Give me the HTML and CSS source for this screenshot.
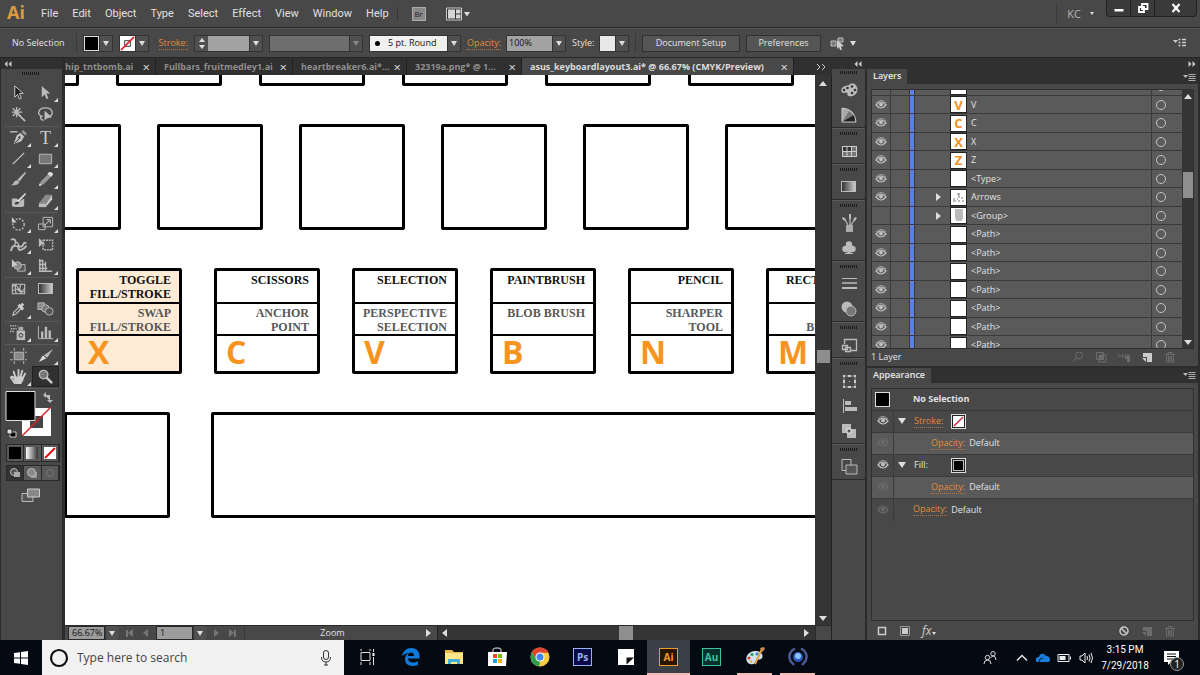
FILE: index.html
```html
<!DOCTYPE html>
<html lang="en">
<head>
    <meta charset="UTF-8">
    <meta name="viewport" content="width=device-width, initial-scale=1.0">
    <title>asus_keyboardlayout3.ai</title>
    <link rel="stylesheet" href="styles.css">
</head>
<body>

    <!-- Shared icons -->
    <svg class="sprite" aria-hidden="true">
        <symbol id="eye" viewBox="0 0 12 10"><path d="M1 5Q6 -1 11 5Q6 11 1 5Z" fill="none" stroke="currentColor" stroke-width="1.2"/><circle cx="6" cy="4.5" r="2" fill="currentColor"/><path d="M1 3Q6 -2 11 3" fill="none" stroke="currentColor" stroke-width=".7"/></symbol>
        <symbol id="menu" viewBox="0 0 13 8"><path d="M0 2h5L2.500 5z" fill="currentColor"/><path d="M5.500 1.500h7M5.500 3.500h7M5.500 5.500h7M5.500 7.500h7" stroke="currentColor" stroke-width=".9"/></symbol>
        <symbol id="new" viewBox="0 0 12 12"><path d="M2 2h9v9H6V6H2z" fill="currentColor"/><path d="M1 7h4v4z" fill="currentColor"/></symbol>
        <symbol id="trash" viewBox="0 0 12 12"><path d="M1 3.500h10M4 3V1.500h4V3M2.500 4v7h7V4M4.500 5v5M6 5v5M7.500 5v5" fill="none" stroke="currentColor"/></symbol>
        <symbol id="none" viewBox="0 0 16 16"><path d="M0 0h16v16H0z" fill="#fff"/><path d="M5 5h6v6H5z" fill="none" stroke="#333"/><path d="M1 15L15 1" stroke="#e0202a" stroke-width="1.800"/></symbol>
        <symbol id="left2" viewBox="0 0 8 6"><path d="M3.500 0v6L.5 3zM7.500 0v6l-3-3z" fill="currentColor"/></symbol>
        <symbol id="right2" viewBox="0 0 8 6"><path d="M.5 0v6l3-3zM4.500 0v6l3-3z" fill="currentColor"/></symbol>
    </svg>

    <!-- Menu bar -->
    <header class="menubar">
        <div class="logo">Ai</div>
        <nav class="menus">
            <a href="#">File</a><a href="#">Edit</a><a href="#">Object</a><a href="#">Type</a><a href="#">Select</a><a href="#">Effect</a><a href="#">View</a><a href="#">Window</a><a href="#">Help</a>
        </nav>
        <div class="menu-tools">
            <button class="bridge" title="Bridge">Br</button>
            <button class="arrange" title="Arrange Documents">
                <svg width="24" height="14" viewBox="0 0 24 14"><path d="M.5 1h15v12H.5z" fill="#333" stroke="#ccc"/><path d="M2 2.500h7v9H2zM10 2.500h4.500v4H10zM10 7.500h4.500v4H10z" fill="#d5d5d5"/><path d="M18 5h6l-3 4.500z" fill="#ddd"/></svg>
            </button>
        </div>
        <button class="user">KC <span class="tri"></span></button>
        <div class="window-buttons">
            <button title="Minimize"><svg width="10" height="10" viewBox="0 0 10 10"><path d="M.5 6h9v2.500h-9z" fill="#fff"/></svg></button>
            <button title="Restore"><svg width="12" height="12" viewBox="0 0 12 12"><path d="M5 2h5.500v5H5zM2 5h5v5H2z" fill="#333" stroke="#fff" stroke-width="1.800"/></svg></button>
            <button class="close" title="Close"><svg width="10" height="10" viewBox="0 0 10 10"><path d="M1.500 1l7 8M8.500 1l-7 8" stroke="#fff" stroke-width="2.200"/></svg></button>
        </div>
    </header>

    <!-- Control bar -->
    <div class="control-bar">
        <span class="no-sel">No Selection</span>
        <span class="sep"></span>
        <button class="swatch-drop" title="Fill"><span class="chip black"></span><span class="drop"></span></button>
        <button class="swatch-drop" title="Stroke color"><svg class="chip"><use href="#none"/></svg><span class="drop"></span></button>
        <label class="link stroke-label" for="strokeWeight"><span>Stroke:</span></label>
        <div class="combo weight"><span class="spin"></span><input type="text" id="strokeWeight"><span class="drop"></span></div>
        <div class="combo profile"><select aria-label="Width profile" disabled><option></option></select><span class="drop dim"></span></div>
        <div class="combo brush"><span class="dot"></span><select aria-label="Brush definition"><option>5 pt. Round</option></select><span class="drop"></span></div>
        <label class="link opacity-label" for="opacity"><span>Opacity:</span></label>
        <div class="combo opacity"><input type="text" id="opacity" value="100%"><span class="drop"></span></div>
        <span class="style-label">Style:</span>
        <button class="swatch-drop" title="Style"><span class="chip pale"></span><span class="drop"></span></button>
        <span class="sep"></span>
        <button class="push setup">Document Setup</button>
        <button class="push prefs">Preferences</button>
        <button class="bare" title="Select similar"><svg width="26" height="14" viewBox="0 0 26 14"><path d="M1 5h5v5H1zM8 2h5v4H8z" fill="#777" stroke="#bbb"/><path d="M7 4l7 6-3 .5 1 3-2 .5-1-3-2 2z" fill="#ccc"/><path d="M20 5h6l-3 5z" fill="#ddd"/></svg></button>
        <button class="bare bar-menu" title="Options"><svg width="13" height="10" viewBox="0 0 13 10"><path d="M0 2h5L2.500 5z" fill="#ccc"/><path d="M5.500 1.500h2M9 1.500h4M5.500 4.500h2M9 4.500h4M5.500 7.500h2M9 7.500h4" stroke="#ccc" stroke-width="1.300"/></svg></button>
    </div>

    <main class="workspace">

        <!-- Tools -->
        <aside class="toolbox">
            <div class="strip"><svg width="8" height="6"><use href="#left2"/></svg></div>
            <div class="grip"></div>
            <div class="tools first">
                <button title="Selection"><svg viewBox="0 0 18 18"><path d="M5 2v12l3-3 2 5 2-1-2-5h4z" fill="#222" stroke="#ccc"/></svg></button>
                <button class="more" title="Direct Selection"><svg viewBox="0 0 18 18"><path d="M5 2v12l3-3 2 5 2-1-2-5h4z" fill="#bbb"/></svg></button>
                <button title="Magic Wand"><svg viewBox="0 0 18 18"><path d="M8 8l8 8" stroke="#bbb" stroke-width="1.800"/><path d="M7 1v11M2 6.500h11M3 2.500l8 8M11 2.500l-8 8" stroke="#bbb" stroke-width="1.500"/></svg></button>
                <button title="Lasso"><svg viewBox="0 0 18 18"><path d="M6 11C-1 10 1 2 9 2s9 7 4 9M4 10q-1 5 3 5" fill="none" stroke="#bbb" stroke-width="1.500"/><path d="M8 5v10l3-2 5-1z" fill="#bbb"/></svg></button>
            </div>
            <div class="tools">
                <button class="more" title="Pen"><svg viewBox="0 0 18 18"><path d="M0 3h8" stroke="#bbb" stroke-width="1.500"/><path d="M4 16l3-9 4-3 4 4-3 5z" fill="#c4c4c4"/><path d="M12 3l2-2 4 4-2 2z" fill="#999"/><path d="M5 15l5-5" stroke="#333"/><circle cx="10" cy="9" r="1.200" fill="#333"/></svg></button>
                <button class="more" title="Type"><span class="type-icon">T</span></button>
                <button class="more" title="Line"><svg viewBox="0 0 18 18"><path d="M3 15L15 3" stroke="#ccc" stroke-width="1.200"/></svg></button>
                <button class="more" title="Rectangle"><svg viewBox="0 0 18 18"><path d="M2.500 4.500h13v10h-13z" fill="#777" stroke="#bbb"/></svg></button>
                <button title="Paintbrush"><svg viewBox="0 0 18 18"><path d="M16 1l1 1-7 9-2-2z" fill="#bbb"/><path d="M8 10l2 2q-2 4-9 3 3-1 3-3 2-3 4-2z" fill="#bbb"/></svg></button>
                <button class="more" title="Pencil"><svg viewBox="0 0 18 18"><path d="M13 2l3 3-9 9-5 2 2-5z" fill="#999"/><path d="M13 1q4 0 4 3l-2 2-4-3z" fill="#ddd"/><path d="M2 16l1-3 2 2z" fill="#ddd"/></svg></button>
                <button title="Blob Brush"><svg viewBox="0 0 18 18"><path d="M2 7h5l3 3 5-3v8q-6 2-13 0z" fill="#bbb"/><path d="M16 1l1 1-7 8-4 2q0-4 3-4z" fill="#ddd"/><path d="M5 13q0-3 3-3l2 1q-1 3-5 2z" fill="#444"/></svg></button>
                <button class="more" title="Eraser"><svg viewBox="0 0 18 18"><path d="M2 12L9 3h7l-6 9z" fill="#888"/><path d="M10 12l6-9v5l-6 7z" fill="#ccc"/><path d="M2 12h8v4H2z" fill="#bbb"/></svg></button>
            </div>
            <div class="tools">
                <button class="more" title="Rotate"><svg viewBox="0 0 18 18"><circle cx="9" cy="10" r="6" fill="none" stroke="#bbb" stroke-width="1.500" stroke-dasharray="2 1.500"/><path d="M2 2v6h5z" fill="#ccc"/></svg></button>
                <button class="more" title="Scale"><svg viewBox="0 0 18 18"><path d="M6.500 2.500h10v10h-10zM1.500 9.500h7v6h-7z" fill="none" stroke="#bbb"/><path d="M8 11l5-5M10 5h4v4" fill="none" stroke="#ddd"/></svg></button>
                <button class="more" title="Width"><svg viewBox="0 0 18 18"><path d="M1 16q1-6 5-6 3 0 3 3t4 1 4-4M1 4q4-2 5 2t4 5 4-2 3-1" fill="none" stroke="#bbb" stroke-width="2"/><circle cx="7" cy="9" r="2" fill="#555" stroke="#ddd"/></svg></button>
                <button title="Free Transform"><svg viewBox="0 0 18 18"><path d="M6.500 4.500h10v10h-10z" fill="none" stroke="#bbb" stroke-width="1.500" stroke-dasharray="2 1"/><path d="M2 2v10l3-3h4z" fill="#bbb"/></svg></button>
                <button class="more" title="Shape Builder"><svg viewBox="0 0 18 18"><path d="M8 8h8v7H8z" fill="#555" stroke="#bbb"/><circle cx="8" cy="9" r="4" fill="#888" stroke="#bbb"/><path d="M2 2v9l3-2h3z" fill="#ccc"/></svg></button>
                <button class="more" title="Perspective Grid"><svg viewBox="0 0 18 18"><path d="M3 2v13M6 3v12M9 5v10M2 15h14M2 12h9M2 8h7M2 4h4" stroke="#bbb" stroke-width="1.500"/></svg></button>
            </div>
            <div class="tools">
                <button title="Mesh"><svg viewBox="0 0 18 18"><path d="M2.500 4.500h13v10h-13zM2 8q4-5 7 1t7-1M2 12q5-4 7-1t7 1M7 4q-3 5 0 11M12 4q-3 5 0 11" fill="none" stroke="#bbb" stroke-width="1.200"/></svg></button>
                <button title="Gradient"><span class="grad"></span></button>
                <button class="more" title="Eyedropper"><svg viewBox="0 0 18 18"><path d="M3 15l1-3 6-6 2 2-6 6z" fill="none" stroke="#bbb" stroke-width="1.300"/><path d="M9 4l5 5M11 6l3-3" stroke="#ccc" stroke-width="3"/></svg></button>
                <button title="Blend"><svg viewBox="0 0 18 18"><path d="M1 2h7v7H1z" fill="#888" stroke="#bbb"/><circle cx="9" cy="8" r="4" fill="#777" stroke="#bbb"/><circle cx="13" cy="11" r="4" fill="#555" stroke="#bbb"/></svg></button>
            </div>
            <div class="tools">
                <button class="more" title="Symbol Sprayer"><svg viewBox="0 0 18 18"><path d="M7 7h9v10H7z" fill="#bbb"/><path d="M9 3h5v4H9z" fill="#aaa"/><circle cx="11.500" cy="12" r="2" fill="none" stroke="#333"/><path d="M0 2h8M1 5h6M0 8h4" stroke="#bbb" stroke-width="1.500" stroke-dasharray="1.500 1"/></svg></button>
                <button class="more" title="Column Graph"><svg viewBox="0 0 18 18"><path d="M1.500 2v13.500H17" fill="none" stroke="#bbb"/><path d="M5.500 15V8M9.500 15V3M13.500 15V7" stroke="#bbb" stroke-width="2.500"/></svg></button>
            </div>
            <div class="tools">
                <button title="Artboard"><svg viewBox="0 0 18 18"><path d="M4.500 5.500h10v8h-10z" fill="#888" stroke="#bbb"/><path d="M4.500 1v3M14.500 1v3M4.500 15v3M14.500 15v3M0 5.500h3M16 5.500h2M0 13.500h3M16 13.500h2" stroke="#bbb"/></svg></button>
                <button class="more" title="Slice"><svg viewBox="0 0 18 18"><path d="M17 2l-6 9-4-2z" fill="#bbb"/><path d="M6 9l4 3-8 4z" fill="#ddd"/></svg></button>
                <button class="more" title="Hand"><svg viewBox="0 0 18 18"><path d="M5 16l-4-6q1-2 4 1M6 11L4 4M9 10V2M11 10l2-7M13 12l3-6" fill="none" stroke="#ccc" stroke-width="2" stroke-linecap="round"/><path d="M5 9h9v4l-2 4H6l-2-4z" fill="#ccc"/></svg></button>
                <button class="picked" title="Zoom"><svg viewBox="0 0 18 18"><circle cx="7" cy="7" r="4.500" fill="#777" stroke="#bbb" stroke-width="1.500"/><path d="M10 10l6 6" stroke="#ccc" stroke-width="2.500"/></svg></button>
            </div>
            <div class="fill-stroke">
                <svg width="48" height="52" viewBox="0 0 48 52">
                    <path d="M17 19h29v28H17z" fill="#fff"/><path d="M25 27h13v12H25z" fill="#444"/><path d="M17 47L46 18" stroke="#d8202a" stroke-width="1.500"/>
                    <path d="M1 2.500h29v29H1z" fill="#000" stroke="#ddd"/>
                    <path d="M40 6h5v6M38 6l3-3v6zM45 14l-3-3h6z" fill="#bbb"/>
                    <path d="M5 43h6v5H5z" fill="#000" stroke="#ccc"/><path d="M2 40h5v5H2z" fill="#ddd" stroke="#222"/>
                </svg>
            </div>
            <div class="mode-row colors">
                <button title="Color"><span class="chip black"></span></button><button title="Gradient"><span class="chip fade"></span></button><button title="None"><svg class="chip" viewBox="0 0 12 12"><path d="M0 0h12v12H0z" fill="#fff"/><path d="M1 11L11 1" stroke="#e01010" stroke-width="2"/></svg></button>
            </div>
            <div class="mode-row draws">
                <button class="on" title="Draw Normal"><svg viewBox="0 0 12 12"><circle cx="5" cy="5" r="3.500" fill="#555" stroke="#bbb"/><path d="M5 5h6v5H5z" fill="#aaa"/></svg></button><button title="Draw Behind"><svg viewBox="0 0 12 12"><path d="M5 5h6v6H5z" fill="#999"/><circle cx="5.500" cy="5.500" r="4" fill="#888" stroke="#bbb"/></svg></button><button title="Draw Inside" disabled><svg viewBox="0 0 12 12"><circle cx="6" cy="6" r="3.500" fill="none" stroke="#777"/></svg></button>
            </div>
            <button class="screen-mode" title="Screen Mode"><svg width="20" height="14" viewBox="0 0 20 14"><path d="M1 5.500h11v8H1z" fill="#555" stroke="#bbb"/><path d="M6.500 1h12v8h-12z" fill="#888" stroke="#ccc"/></svg></button>
        </aside>

        <!-- Document -->
        <section class="document">
            <div class="tabs">
                <div class="tab cut"><span>hip_tntbomb.ai</span><button>×</button></div>
                <div class="tab fruit"><span>Fullbars_fruitmedley1.ai</span><button>×</button></div>
                <div class="tab heart"><span>heartbreaker6.ai*...</span><button>×</button></div>
                <div class="tab png"><span>32319a.png* @ 1...</span><button>×</button></div>
                <div class="tab active"><span>asus_keyboardlayout3.ai* @ 66.67% (CMYK/Preview)</span><button>×</button></div>
                <button class="tabs-more"><svg width="10" height="8" viewBox="0 0 10 8"><path d="M1 1l3 3-3 3M6 1l3 3-3 3" fill="none" stroke="#ccc"/></svg></button>
            </div>
            <div class="view">
                <div class="canvas">
                    <div class="row row-numbers"><div class="key"></div><div class="key"></div><div class="key"></div><div class="key"></div><div class="key"></div><div class="key"></div></div>
                    <div class="row row-home"><div class="key"></div><div class="key"></div><div class="key"></div><div class="key"></div><div class="key"></div><div class="key"></div></div>
                    <div class="row row-letters">
                        <div class="key peach"><p>TOGGLE<br>FILL/STROKE</p><p class="shift">SWAP<br>FILL/STROKE</p><b>X</b></div>
                        <div class="key"><p>SCISSORS</p><p class="shift">ANCHOR<br>POINT</p><b>C</b></div>
                        <div class="key"><p>SELECTION</p><p class="shift">PERSPECTIVE<br>SELECTION</p><b>V</b></div>
                        <div class="key"><p>PAINTBRUSH</p><p class="shift">BLOB BRUSH</p><b>B</b></div>
                        <div class="key"><p>PENCIL</p><p class="shift">SHARPER<br>TOOL</p><b>N</b></div>
                        <div class="key"><p>RECTANGLE</p><p class="shift">SHAPE<br>BUILDER</p><b>M</b></div>
                    </div>
                    <div class="row row-space"><div class="key"></div><div class="key space"></div></div>
                </div>
                <div class="vscroll"><span class="up"></span><span class="thumb"></span><span class="down"></span></div>
            </div>
            <div class="status">
                <input class="zoom-box" type="text" aria-label="Zoom" value="66.67%"><span class="drop"></span>
                <div class="pager"><span class="first-page"><i class="bar-tick"></i><i class="left"></i></span><span class="left"></span></div>
                <input class="page-box" type="text" aria-label="Artboard" value="1"><span class="drop"></span>
                <div class="pager"><span class="right"></span><span class="first-page"><i class="right"></i><i class="bar-tick"></i></span></div>
                <div class="tool-name">Zoom</div>
                <div class="tool-arrow"><span class="right"></span></div>
                <div class="hscroll"><span class="left"></span><span class="thumb"></span><span class="right"></span></div>
                <div class="corner"></div>
            </div>
        </section>

        <!-- Panels -->
        <aside class="side">
            <div class="strip"><svg width="8" height="6"><use href="#left2"/></svg><svg width="8" height="6"><use href="#right2"/></svg></div>
            <div class="side-body">
                <div class="dock">
                    <div class="dock-group">
                        <div class="grip"></div>
                        <button title="Color"><svg viewBox="0 0 18 18"><path d="M9 4c3-3 8-1 8.500 4 0 6-5 8-9 7q-2-1-1-3-2-1-4 0-3-1-2-4 1-3 7.500-4z" fill="#bbb"/><g fill="#333"><circle cx="4" cy="9" r="1.300"/><circle cx="7.500" cy="7" r="1.300"/><circle cx="12" cy="5.500" r="1.300"/><circle cx="15" cy="9" r="1.300"/><circle cx="12" cy="12" r="1.300"/></g></svg></button>
                        <button title="Color Guide"><svg viewBox="0 0 18 18"><path d="M2 2q13 1 14 14H2z" fill="#aaa"/><path d="M2 16L9 5q6 4 7 11z" fill="#777"/><path d="M2 16L14 9q2 3 2 7z" fill="#222"/><path d="M2 2q13 1 14 14H2z" fill="none" stroke="#ccc"/></svg></button>
                    </div>
                    <div class="dock-group">
                        <div class="grip"></div>
                        <button title="Swatches"><svg viewBox="0 0 18 18"><path d="M2 4h15v11H2z" fill="#ccc"/><path d="M3 5h3.500v4H3zM7.500 5H11v4H7.500z" fill="#333"/><path d="M12 5h4v4h-4zM3 10h3.500v4H3zM7.500 10H11v4H7.500zM12 10h4v4h-4z" fill="#777"/></svg></button>
                    </div>
                    <div class="dock-group">
                        <div class="grip"></div>
                        <button title="Gradient"><span class="grad"></span></button>
                    </div>
                    <div class="dock-group">
                        <div class="grip"></div>
                        <button title="Brushes"><svg viewBox="0 0 18 18"><path d="M6 11h7v7H6z" fill="#aaa"/><path d="M8 11L4 4M10 11V1M11 11l4-6" stroke="#bbb" stroke-width="1.200"/><path d="M2 3l3 1 1 3-3-1zM9 0h2v5H9zM13 6l2-3 2 1-2 3z" fill="#bbb"/></svg></button>
                        <button title="Symbols"><svg viewBox="0 0 18 18"><g fill="#bbb"><circle cx="9" cy="5.500" r="3.200"/><circle cx="5.500" cy="10" r="3.200"/><circle cx="12.500" cy="10" r="3.200"/><path d="M8 8h2l1 6h2v1H5v-1h2z"/></g></svg></button>
                    </div>
                    <div class="dock-group">
                        <div class="grip"></div>
                        <button title="Stroke"><svg viewBox="0 0 18 18"><path d="M2 3.500h15" stroke="#bbb"/><path d="M2 8h15" stroke="#bbb" stroke-width="1.500"/><path d="M2 13h15" stroke="#bbb" stroke-width="2"/></svg></button>
                        <button title="Transparency"><svg viewBox="0 0 18 18"><circle cx="7" cy="7" r="5.500" fill="#bbb"/><circle cx="11" cy="11" r="5" fill="#777" stroke="#bbb"/></svg></button>
                    </div>
                    <div class="dock-group">
                        <div class="grip"></div>
                        <button title="Links"><svg viewBox="0 0 18 18"><path d="M4.500 8V3.500h12v11H10M2.500 9.500h5v4h-5zM5.500 11.500h5v4h-5z" fill="none" stroke="#bbb" stroke-width="1.300"/></svg></button>
                    </div>
                    <div class="dock-group">
                        <div class="grip"></div>
                        <button title="Transform"><svg viewBox="0 0 18 18"><path d="M4 4h11v11H4z" fill="none" stroke="#999"/><g fill="#ccc"><path d="M3 3h2v2H3zM8 3h3v2H8zM14 3h2v2h-2zM3 8h2v3H3zM14 8h2v3h-2zM3 14h2v2H3zM8 14h3v2H8zM14 14h2v2h-2zM9 9h1v1H9z"/></g></svg></button>
                        <button title="Align"><svg viewBox="0 0 18 18"><path d="M3.500 2v14" stroke="#bbb"/><path d="M5 4h6v4H5zM5 10h12v4H5z" fill="#bbb"/></svg></button>
                        <button title="Pathfinder"><svg viewBox="0 0 18 18"><path d="M2 2h9v9H2zM7 7h9v9H7z" fill="#bbb"/><path d="M7 7h4v4H7z" fill="#555" stroke="#eee"/></svg></button>
                    </div>
                    <div class="dock-group">
                        <div class="grip"></div>
                        <button title="Artboards"><svg viewBox="0 0 18 18"><path d="M2 1.500h9v11H2z" fill="none" stroke="#bbb"/><path d="M6 7h11v9H6z" fill="#555" stroke="#bbb"/></svg></button>
                    </div>
                </div>

                <div class="panels">
                    <section class="panel layers">
                        <div class="panel-tabs"><h2>Layers</h2><svg width="13" height="8"><use href="#menu"/></svg></div>
                        <div class="layer-box">
                            <div class="layer-list" id="layerList"></div>
                            <div class="layer-scroll"><span class="up"></span><span class="thumb"></span><span class="down"></span></div>
                        </div>
                        <div class="panel-foot">
                            <span>1 Layer</span>
                            <div class="foot-icons">
                                <svg viewBox="0 0 12 12"><circle cx="7" cy="4.500" r="3.500" fill="none" stroke="currentColor"/><path d="M4 7l-3 4" stroke="currentColor"/></svg>
                                <svg viewBox="0 0 12 12"><path d="M1.500 1.500h7v7h-7zM4 4h7v7H4z" fill="none" stroke="currentColor"/><path d="M4 4h4v4H4z" fill="currentColor"/></svg>
                                <svg viewBox="0 0 12 12"><path d="M0 2v3h5M4 3l2 2-2 2M7 4h4v6" fill="none" stroke="currentColor"/><path d="M7 5h5v6H9V8H7z" fill="currentColor"/></svg>
                                <svg class="lit"><use href="#new"/></svg>
                                <svg><use href="#trash"/></svg>
                            </div>
                        </div>
                    </section>

                    <section class="panel appearance">
                        <div class="panel-tabs"><h2>Appearance</h2><svg width="13" height="8"><use href="#menu"/></svg></div>
                        <div class="look-list">
                            <div class="look head"><span class="well black"></span><strong>No Selection</strong></div>
                            <div class="look"><svg class="eye"><use href="#eye"/></svg><span class="tri"></span><a class="link" href="#">Stroke:</a><span class="well"><svg viewBox="0 0 12 12"><path d="M0 0h12v12H0z" fill="#fff"/><path d="M1 11L11 1" stroke="#c8203c" stroke-width="1.500"/></svg></span></div>
                            <div class="look sub"><svg class="eye off"><use href="#eye"/></svg><a class="link" href="#">Opacity:</a><span>Default</span></div>
                            <div class="look"><svg class="eye"><use href="#eye"/></svg><span class="tri"></span><span class="fill-name">Fill:</span><span class="well"><i class="fill-chip"></i></span></div>
                            <div class="look sub"><svg class="eye off"><use href="#eye"/></svg><a class="link" href="#">Opacity:</a><span>Default</span></div>
                            <div class="look plain"><svg class="eye off"><use href="#eye"/></svg><a class="link" href="#">Opacity:</a><span>Default</span></div>
                        </div>
                        <div class="panel-foot">
                            <div class="foot-icons start">
                                <svg class="lit" viewBox="0 0 12 12"><path d="M2.500 2.500h7v7h-7z" fill="none" stroke="currentColor" stroke-width="1.500"/></svg>
                                <svg class="lit" viewBox="0 0 12 12"><path d="M1.500 1.500h9v9h-9z" fill="none" stroke="#999"/><path d="M3 3h6v6H3z" fill="currentColor"/></svg>
                                <button class="fx" title="Add effect">fx<span class="tri"></span></button>
                            </div>
                            <div class="foot-icons">
                                <svg class="lit" viewBox="0 0 12 12"><circle cx="6" cy="6" r="4" fill="none" stroke="currentColor" stroke-width="1.500"/><path d="M3 3l6 6" stroke="currentColor" stroke-width="1.500"/></svg>
                                <svg><use href="#new"/></svg>
                                <svg><use href="#trash"/></svg>
                            </div>
                        </div>
                    </section>
                </div>
            </div>
        </aside>
    </main>

    <!-- Taskbar -->
    <footer class="taskbar">
        <button class="start" title="Start"><svg width="14" height="14" viewBox="0 0 14 14"><path d="M0 2l6-.8v5.300H0zM7 1l7-1v6.500H7zM0 7.500h6v5.300L0 12zM7 7.500h7V14l-7-1z" fill="#fff"/></svg></button>
        <div class="search">
            <svg width="20" height="20" viewBox="0 0 20 20"><circle cx="10" cy="10" r="8" fill="none" stroke="#111" stroke-width="2.200"/></svg>
            <input type="text" placeholder="Type here to search" aria-label="Search">
            <svg width="12" height="18" viewBox="0 0 12 18"><rect x="3.500" y="1.500" width="5" height="9" rx="2.500" fill="none" stroke="#333"/><path d="M1.500 8q0 5 4.500 5t4.500-5M6 13v3M4 16h4" fill="none" stroke="#333"/></svg>
        </div>
        <div class="apps">
            <button title="Task View"><svg viewBox="0 0 20 20"><path d="M3 5.500h9v8H3zM3 2v2M12 2v2M3 15v3M12 15v3M15.500 2v3M15.500 10v8" fill="none" stroke="#ddd"/><path d="M14.500 6h2v3h-2z" fill="#fff"/></svg></button>
            <button title="Edge"><svg viewBox="0 0 20 20"><path d="M1 9Q3 1 10 1q8 0 8.500 8v2.500H7q.5 4 5 4 3 0 5-1.300v3.500Q15 19 11.500 19 4 19 4 12q0-4 4-6Q4 6 1 9zm6 0h6q0-3.500-3-3.500T7 9z" fill="#0f7bd8"/></svg></button>
            <button title="File Explorer"><svg viewBox="0 0 20 20"><path d="M1 3h7l2 2h9v12H1z" fill="#e7b94a"/><path d="M1 6h18v11H1z" fill="#fde58e"/><path d="M4 17v-5h12v5h-3v-2H7v2z" fill="#3fb0dc"/></svg></button>
            <button title="Store"><svg viewBox="0 0 20 20"><path d="M6 6V3q0-2 4-2t4 2v3" fill="none" stroke="#aaa" stroke-width="1.300"/><path d="M1 5h19l-1 14H1z" fill="#fff"/><path d="M6 7h4v4H6z" fill="#e8502a"/><path d="M11 7h4v4h-4z" fill="#7ab800"/><path d="M6 12h4v4H6z" fill="#1a9fe0"/><path d="M11 12h4v4h-4z" fill="#f8b400"/></svg></button>
            <button title="Chrome"><svg viewBox="0 0 20 20"><circle cx="10" cy="10" r="9.500" fill="#f8ce3c"/><path d="M1.800 5.200A9.500 9.500 0 0 1 18.500 5.700H10L6 12z" fill="#e0432f"/><path d="M1.800 5.200L6 12l4 2.500-1 5A9.500 9.500 0 0 1 1.800 5.200z" fill="#2e9e4f"/><circle cx="10" cy="10" r="4.500" fill="#fff"/><circle cx="10" cy="10" r="3.500" fill="#4484ee"/></svg></button>
            <button title="Photoshop"><span class="adobe ps">Ps</span></button>
            <button title="Sticky Notes"><svg viewBox="0 0 20 20"><path d="M2 2h16v16H2z" fill="#fff"/><path d="M10.500 10.500H18l-7.500 7z" fill="#111"/></svg></button>
            <button class="current" title="Illustrator"><span class="adobe ai">Ai</span></button>
            <button title="Audition"><span class="adobe au">Au</span></button>
            <button class="open" title="Paint"><svg viewBox="0 0 20 20"><path d="M10 4c8 0 9 6 6 8-2 1-4 0-5 2s-2 4-6 3C-1 15 0 5 10 4z" fill="#cfe2ef"/><circle cx="4" cy="11" r="1.500" fill="#d33"/><circle cx="7" cy="7.500" r="1.500" fill="#2a9a4a"/><circle cx="12" cy="7" r="1.500" fill="#3a78d0"/><circle cx="6" cy="14.500" r="1.300" fill="#e8b820"/><path d="M10 17l7-15" stroke="#e0a040" stroke-width="2"/><path d="M15 1l4-1 1 2-3 3z" fill="#d08a50"/></svg></button>
            <button class="open" title="Recorder"><svg viewBox="0 0 20 20"><path d="M7 1.500Q-1 6 2.500 14l3.500 4M13 1.500q8 4.500 4.500 12.500L14 18" fill="none" stroke="#4a5a94" stroke-width="2.500"/><circle cx="10" cy="10" r="5" fill="#2a5cb8"/><circle cx="10" cy="9" r="3" fill="#8ac0ff"/></svg></button>
        </div>
        <div class="tray">
            <svg class="people" width="14" height="14" viewBox="0 0 14 14"><circle cx="4.500" cy="6.500" r="2.200" fill="none" stroke="#ddd"/><path d="M1 13q0-4 3.500-4T8 13M7.500 7q1-2 3-2T13 9" fill="none" stroke="#ddd"/><circle cx="10" cy="2.800" r="2.200" fill="none" stroke="#ddd"/></svg>
            <svg width="12" height="8" viewBox="0 0 12 8"><path d="M1 6.500l5-5 5 5" fill="none" stroke="#eee" stroke-width="1.300"/></svg>
            <svg width="15" height="10" viewBox="0 0 15 10"><path d="M1 8q-1-4 3-4 1-4 5-3l2 2q4 0 4 4 0 2-2 2H3q-2 0-2-1z" fill="#1a7fdc"/><path d="M4 9Q4 5 8 5" fill="none" stroke="#052040"/></svg>
            <svg width="15" height="10" viewBox="0 0 15 10"><path d="M1 1.500h11v7H1zM13.500 3.500v3" fill="none" stroke="#eee"/><path d="M2.500 3h6v4h-6z" fill="#eee"/></svg>
            <svg width="14" height="12" viewBox="0 0 14 12"><path d="M1 4h2l3-3v10L3 8H1zM8 4q1 2 0 4M10 2.500q2 3.500 0 7M12 1q3 5 0 10" fill="none" stroke="#eee"/></svg>
            <div class="clock"><span>3:15 PM</span><span>7/29/2018</span></div>
            <button class="notes" title="Notifications"><svg width="15" height="15" viewBox="0 0 15 15"><path d="M0 1h15v11H7l-3 3v-3H0z" fill="#fff"/><path d="M3 4h9M3 6.500h9M3 9h6" stroke="#111"/></svg><span class="badge">1</span></button>
        </div>
    </footer>

    <script>
        const layers = [
            { name: '' },
            { name: 'V', letter: true },
            { name: 'C', letter: true },
            { name: 'X', letter: true },
            { name: 'Z', letter: true },
            { name: '<Type>' },
            { name: 'Arrows', group: true, art: 'M2 11h3M7 11h2M11 11h2M2 9h2M6 9h1M10 8h2M6 4h2M8 3v3M7 7h2' },
            { name: '<Group>', group: true, hidden: true, art: 'M4 2h8M4 4h8M4 6h8M4 8h8M4 10h8M5 12h6' },
            { name: '<Path>' }, { name: '<Path>' }, { name: '<Path>' }, { name: '<Path>' },
            { name: '<Path>' }, { name: '<Path>' }, { name: '<Path>' }
        ];

        const list = document.getElementById('layerList');
        layers.forEach(function(layer) {
            const row = document.createElement('div');
            row.className = 'layer';
            row.innerHTML =
                '<span class="cell vis">' + (layer.hidden ? '' : '<svg class="eye"><use href="#eye"/></svg>') + '</span>' +
                '<span class="cell"></span><span class="color"></span>' +
                '<span class="twist">' + (layer.group ? '<i class="right"></i>' : '') + '</span>' +
                '<span class="thumbnail">' + (layer.letter ? layer.name : '') +
                (layer.art ? '<svg viewBox="0 0 15 15"><path d="' + layer.art + '" stroke="#777" stroke-width="1"/></svg>' : '') + '</span>' +
                '<span class="name"></span><span class="target"></span>';
            row.querySelector('.name').textContent = layer.name;
            list.appendChild(row);
        });
    </script>

</body>
</html>
```
FILE: styles.css
```css
* {
    box-sizing: border-box;
}
body {
    margin: 0;
    height: 100vh;
    display: flex;
    flex-direction: column;
    overflow: hidden;
    background-color: #484848;
    color: #e2e2e2;
    font-family: "Open Sans", "Noto Sans", sans-serif;
    font-size: 9px;
    line-height: 12px;
}
button, input, select {
    font: inherit;
    color: inherit;
    margin: 0;
    padding: 0;
    border: 0;
    background: none;
    border-radius: 0;
    appearance: none;
}
button {
    display: flex;
    align-items: center;
    justify-content: center;
}
input, select {
    min-width: 0;
}
h2, p {
    margin: 0;
    font-size: inherit;
}
svg {
    display: block;
    flex: none;
}
.sprite {
    position: absolute;
    width: 0;
    height: 0;
}

/* Little triangles */
.tri, .drop::after, .down::after {
    content: "";
    border: 3px solid transparent;
    border-top: 5px solid #ddd;
    border-bottom: 0;
}
.up::after {
    content: "";
    border: 4px solid transparent;
    border-bottom: 5px solid #ddd;
    border-top: 0;
}
.down::after {
    border-width: 5px 4px 0;
}
.left {
    border: 4px solid transparent;
    border-right: 5px solid #ddd;
    border-left: 0;
}
.right {
    border: 4px solid transparent;
    border-left: 5px solid #ddd;
    border-right: 0;
}
.link {
    color: #e08a3a;
    text-decoration: none;
}
.link span, a.link {
    border-bottom: 1px dotted #b87438;
}

/* Menu bar */
.menubar {
    height: 28px;
    flex: none;
    display: flex;
    align-items: center;
    border-bottom: 1px solid #2a2a2a;
}
.logo {
    width: 33px;
    padding-left: 7px;
    padding-bottom: 3px;
    font: bold 18px/24px "Noto Sans", sans-serif;
    color: #d99a42;
}
.menus {
    display: flex;
    gap: 14px;
    padding-left: 8px;
    font: 11px/16px Roboto, "Open Sans", sans-serif;
}
.menus a {
    color: #e0e0e0;
    text-decoration: none;
}
.menu-tools {
    display: flex;
    align-items: center;
    gap: 20px;
    margin-left: 8px;
    padding-left: 14px;
    border-left: 1px solid #383838;
}
.bridge {
    width: 14px;
    height: 14px;
    background-color: #8a8a8a;
    border: 1px solid #aaa;
    color: #222;
    font-size: 8px;
}
.user {
    margin-left: auto;
    height: 22px;
    padding: 0 12px 0 10px;
    gap: 9px;
    font: 11px/16px "Open Sans", sans-serif;
    color: #b5b5b5;
    border-left: 1px solid #3a3a3a;
}
.user .tri {
    border-width: 3px 2px 0;
}
.window-buttons {
    display: flex;
    align-self: flex-start;
    margin-right: 3px;
    border: 1px solid #222;
    border-top: 0;
    border-radius: 0 0 4px 4px;
    background-color: #3a3a3a;
}
.window-buttons button {
    width: 24px;
    height: 16px;
    border-right: 1px solid #222;
}
.window-buttons .close {
    width: 41px;
    border: 0;
}

/* Control bar */
.control-bar {
    height: 29px;
    flex: none;
    display: flex;
    align-items: center;
    gap: 6px;
    padding-left: 12px;
    border-top: 1px solid #555;
}
.sep {
    width: 1px;
    height: 20px;
    background-color: #3a3a3a;
}
.no-sel {
    width: 58px;
    white-space: nowrap;
}
.drop {
    width: 13px;
    flex: none;
    display: flex;
    align-items: center;
    justify-content: center;
    background-color: #505050;
    border-left: 1px solid #333;
}
.drop.dim::after {
    border-top-color: #888;
}
.swatch-drop {
    width: 30px;
    height: 17px;
    align-items: stretch;
    justify-content: flex-start;
    border: 1px solid #333;
}
.swatch-drop .chip {
    width: 15px;
    height: 15px;
}
.chip.black {
    background-color: #000;
    border: 1px solid #ddd;
}
.chip.pale {
    background-color: #e8e8e8;
}
.stroke-label {
    width: 33px;
    text-align: right;
}
.opacity-label {
    width: 33px;
    white-space: nowrap;
}
.style-label {
    width: 21px;
    white-space: nowrap;
}
.combo {
    height: 17px;
    display: flex;
    border: 1px solid #333;
    background-color: #a2a2a2;
    color: #111;
}
.combo input, .combo select {
    flex: 1;
    width: 0;
}
.weight {
    width: 69px;
}
.spin {
    width: 13px;
    display: flex;
    flex-direction: column;
    align-items: center;
    justify-content: center;
    gap: 3px;
    background-color: #505050;
}
.spin::before {
    content: "";
    border: 3px solid transparent;
    border-bottom: 4px solid #ddd;
    border-top: 0;
}
.spin::after {
    content: "";
    border: 3px solid transparent;
    border-top: 4px solid #ddd;
    border-bottom: 0;
}
.profile {
    width: 94px;
    background-color: #6e6e6e;
}
.brush {
    width: 92px;
    background-color: #f0f0f0;
}
.dot {
    width: 5px;
    height: 5px;
    margin: 5px 8px 0 5px;
    border-radius: 50%;
    background-color: #000;
}
.opacity {
    width: 60px;
}
.opacity input {
    padding-left: 2px;
}
.push {
    height: 17px;
    border: 1px solid #303030;
    background-color: #555;
    white-space: nowrap;
}
.setup {
    width: 98px;
}
.prefs {
    width: 75px;
}
.bare {
    margin-left: 3px;
}
.bar-menu {
    margin-left: auto;
    margin-right: 14px;
}

/* Workspace */
.workspace {
    flex: 1;
    min-height: 0;
    display: flex;
    border-top: 1px solid #262626;
}
.strip {
    height: 11px;
    flex: none;
    display: flex;
    align-items: center;
    background-color: #303030;
    color: #ccc;
}
.grip {
    width: 17px;
    height: 3px;
    margin: 0 auto;
    background: repeating-linear-gradient(90deg, #1c1c1c 0 1px, #484848 1px 2px);
}

/* Tools */
.toolbox {
    width: 65px;
    flex: none;
    border-left: 1px solid #2c2c2c;
    border-right: 3px solid #2c2c2c;
}
.toolbox .strip {
    padding-left: 3px;
}
.toolbox .grip {
    margin: 3px auto 6px 21px;
}
.tools {
    display: grid;
    grid-template-columns: 27px 27px;
    grid-auto-rows: 21px;
    margin: 0 4px;
    padding-bottom: 1px;
    border-top: 1px solid #5a5a5a;
}
.tools.first {
    grid-auto-rows: 22px;
    border-top: 0;
}
.tools button {
    position: relative;
}
.tools svg {
    width: 17px;
    height: 17px;
}
.more::after {
    content: "";
    position: absolute;
    right: 1px;
    bottom: 1px;
    border: 2px solid transparent;
    border-right-color: #ddd;
    border-bottom-color: #ddd;
}
.type-icon {
    font: 18px/18px "Liberation Serif", serif;
    color: #c8c8c8;
}
.grad {
    width: 15px;
    height: 11px;
    border: 1px solid #bbb;
    background: linear-gradient(90deg, #333, #ccc);
}
.tools button.picked {
    background-color: #303030;
    border: 1px solid #222;
}
.fill-stroke {
    margin: 0 4px;
    border-top: 1px solid #5a5a5a;
}
.mode-row {
    display: flex;
    width: 54px;
    margin-left: 5px;
    border: 1px solid #2a2a2a;
}
.mode-row button {
    flex: 1;
    height: 14px;
    border-right: 1px solid #2a2a2a;
    background-color: #5a5a5a;
}
.mode-row button.on {
    background-color: #333;
}
.mode-row svg, .mode-row .chip {
    width: 12px;
    height: 12px;
}
.colors {
    margin-top: 3px;
}
.colors button {
    height: 16px;
}
.mode-row .black {
    border: 0;
}
.chip.fade {
    background: linear-gradient(90deg, #fff, #333);
}
.draws {
    margin-top: 3px;
}
.screen-mode {
    margin: 7px 0 0 20px;
}

/* Document */
.document {
    flex: 1;
    min-width: 0;
    display: flex;
    flex-direction: column;
}
.tabs {
    height: 17px;
    flex: none;
    display: flex;
    background-color: #303030;
    color: #8e8e8e;
    font-weight: bold;
}
.tab {
    display: flex;
    align-items: center;
    justify-content: space-between;
    padding: 0 5px 0 8px;
    border-right: 1px solid #222;
    white-space: nowrap;
    overflow: hidden;
}
.tab button {
    font-size: 13px;
    font-weight: normal;
    color: #ddd;
}
.cut {
    width: 91px;
    padding-left: 0;
}
.fruit {
    width: 137px;
}
.heart {
    width: 114px;
}
.png {
    width: 115px;
}
.active {
    width: 272px;
    background-color: #484848;
    color: #ddd;
}
.tabs-more {
    margin-left: auto;
    padding-right: 6px;
}
.view {
    flex: 1;
    min-height: 0;
    display: flex;
}
.canvas {
    flex: 1;
    min-width: 0;
    display: flex;
    flex-direction: column;
    gap: 38px;
    overflow: hidden;
    background-color: #fff;
}
.row {
    display: flex;
    height: 106px;
    flex: none;
}
.row-numbers {
    gap: 37px;
    margin-top: -95px;
    margin-left: -92px;
}
.row-home {
    gap: 36px;
    margin-left: -50px;
}
.row-letters {
    gap: 32px;
    margin-left: 11px;
}
.row-space {
    gap: 41px;
    margin-left: -1px;
}
.key {
    width: 106px;
    height: 106px;
    flex: none;
    display: grid;
    grid-template-rows: 33px 32px 35px;
    border: 3px solid #000;
    border-radius: 2px;
    color: #111;
}
.key.space {
    width: 900px;
}
.key.peach {
    background-color: #fdebd5;
}
.key p {
    padding: 2px 8px 0 0;
    border-bottom: 2px solid #000;
    font: bold 12px/14px "Liberation Serif", serif;
    text-align: right;
}
.key .shift {
    color: #58585a;
    border-color: #000;
}
.key b {
    padding-left: 9px;
    font-size: 32px;
    line-height: 32px;
    color: #f7941e;
}
.vscroll {
    width: 17px;
    display: flex;
    flex-direction: column;
    align-items: center;
    justify-content: space-between;
    padding: 6px 0 4px;
    background-color: #353535;
    border-right: 1px solid #222;
}
.vscroll span, .layer-scroll span {
    display: flex;
}
.vscroll .thumb {
    width: 13px;
    height: 13px;
    margin-top: 10px;
    background-color: #8e8e8e;
}
.status {
    height: 15px;
    flex: none;
    display: flex;
    align-items: stretch;
    padding-left: 3px;
    background-color: #484848;
    border-top: 1px solid #2a2a2a;
}
.status input {
    padding-left: 3px;
    background-color: #9c9c9c;
    color: #111;
    border: 1px solid #2a2a2a;
}
.zoom-box, .page-box {
    width: 37px;
}
.pager {
    width: 38px;
    display: flex;
    align-items: center;
    justify-content: center;
    gap: 10px;
    opacity: 0.3;
}
.first-page {
    display: flex;
    align-items: center;
}
.bar-tick {
    width: 2px;
    height: 7px;
    background-color: #ddd;
}
.tool-name {
    width: 176px;
    padding-top: 1px;
    text-align: center;
    border-left: 1px solid #3a3a3a;
}
.tool-arrow {
    width: 17px;
    display: flex;
    align-items: center;
    justify-content: center;
}
.hscroll {
    flex: 1;
    display: flex;
    align-items: center;
    justify-content: space-between;
    padding: 0 6px 0 4px;
    background-color: #353535;
    border-left: 1px solid #222;
}
.hscroll .thumb {
    width: 14px;
    height: 14px;
    background-color: #8e8e8e;
}
.corner {
    width: 17px;
    border-left: 1px solid #2a2a2a;
    border-right: 1px solid #222;
}

/* Panels */
.side {
    width: 368px;
    flex: none;
    display: flex;
    flex-direction: column;
    border-right: 2px solid #2c2c2c;
}
.side .strip {
    justify-content: space-between;
    padding: 0 2px 0 22px;
}
.side-body {
    flex: 1;
    min-height: 0;
    display: flex;
}
.dock {
    width: 33px;
    flex: none;
}
.dock-group {
    padding-top: 2px;
    border-bottom: 1px solid #2a2a2a;
}
.dock-group .grip {
    margin-bottom: 3px;
}
.dock-group + .dock-group {
    border-top: 1px solid #5a5a5a;
    padding-top: 3px;
}
.dock-group button {
    width: 33px;
    height: 25px;
}
.dock-group svg {
    width: 18px;
    height: 18px;
}
.panels {
    flex: 1;
    min-width: 0;
    display: flex;
    flex-direction: column;
    border-left: 2px solid #2c2c2c;
}
.panel {
    min-height: 0;
    display: flex;
    flex-direction: column;
}
.layers {
    flex: 298 1 0;
}
.appearance {
    flex: 273 1 0;
    border-top: 2px solid #2c2c2c;
}
.panel-tabs {
    height: 15px;
    flex: none;
    display: flex;
    align-items: center;
    justify-content: space-between;
    padding-right: 2px;
    background-color: #303030;
    color: #bbb;
}
.panel-tabs h2 {
    padding: 1px 6px 2px;
    background-color: #484848;
    color: #e8e8e8;
    font-weight: 600;
}
.layer-box {
    flex: 1;
    min-height: 0;
    display: flex;
    margin: 5px 4px 0;
    border: 1px solid #303030;
}
.layer-list {
    flex: 1;
    overflow: hidden;
    background-color: #5a5a5a;
}
.layer {
    height: 18px;
    display: flex;
    align-items: center;
    border-bottom: 1px solid #3a3a3a;
}
.layer:nth-child(odd) {
    height: 19px;
}
.layer:first-child {
    margin-top: -13px;
}
.eye {
    width: 12px;
    height: 10px;
    color: #c0c0c0;
}
.eye.off {
    color: #6a6a6a;
}
.cell {
    width: 19px;
    align-self: stretch;
    display: flex;
    align-items: center;
    justify-content: center;
    border-right: 1px solid #3a3a3a;
}
.color {
    width: 5px;
    align-self: stretch;
    background-color: #5a7fe6;
    border-right: 1px solid #3a3a3a;
}
.twist {
    width: 35px;
    display: flex;
    justify-content: flex-end;
    padding-right: 9px;
}
.thumbnail {
    width: 17px;
    height: 17px;
    display: flex;
    align-items: center;
    justify-content: center;
    background-color: #fff;
    border: 1px solid #222;
    color: #f09020;
    font-size: 13px;
    font-weight: bold;
}
.name {
    padding-left: 4px;
    flex: 1;
}
.target {
    width: 31px;
    align-self: stretch;
    display: flex;
    align-items: center;
    padding-left: 4px;
    border-left: 1px solid #3a3a3a;
}
.target::after {
    content: "";
    width: 8px;
    height: 8px;
    border: 1px solid #c5c5c5;
    border-radius: 50%;
}
.layer-scroll {
    width: 11px;
    display: flex;
    flex-direction: column;
    align-items: center;
    justify-content: space-between;
    padding: 4px 0 3px;
    background-color: #353535;
}
.layer-scroll .thumb {
    width: 10px;
    height: 26px;
    margin-bottom: 69px;
    background-color: #8e8e8e;
}
.panel-foot {
    height: 17px;
    flex: none;
    display: flex;
    align-items: center;
    justify-content: space-between;
    padding: 0 22px 0 4px;
}
.appearance .panel-foot {
    height: 19px;
}
.foot-icons {
    display: flex;
    align-items: center;
    gap: 11px;
    color: #6c6c6c;
}
.foot-icons svg {
    width: 12px;
    height: 12px;
}
.foot-icons .lit {
    color: #ccc;
}
.foot-icons.start {
    padding-left: 5px;
}
.fx {
    font: italic 12px/14px "Open Sans", sans-serif;
    color: #ccc;
}
.fx .tri {
    border-width: 3px 2px 0;
    margin-top: 6px;
}
.look-list {
    flex: 1;
    min-height: 0;
    margin: 5px 4px 0;
    border: 1px solid #303030;
}
.look {
    height: 22px;
    display: flex;
    align-items: center;
    padding-left: 5px;
    border-bottom: 1px solid #3a3a3a;
    background: linear-gradient(90deg, transparent 21px, #3a3a3a 21px 22px, transparent 22px);
}
.look.head {
    gap: 23px;
    padding-left: 3px;
    background: none;
}
.look .eye {
    margin-right: 9px;
}
.look > .tri {
    border-width: 6px 4px 0;
    margin-right: 8px;
}
.look a {
    margin-right: 4px;
}
.look.sub {
    background-color: #5a5a5a;
}
.look.sub a {
    margin-left: 33px;
}
.look.plain {
    border-bottom: 0;
}
.look.plain a {
    margin-left: 15px;
}
.well {
    width: 15px;
    height: 15px;
    padding: 1px;
    background-color: #222;
    border: 1px solid #ddd;
    margin-left: auto;
    margin-right: 227px;
}
.well svg {
    width: 11px;
    height: 11px;
}
.fill-chip {
    display: block;
    height: 11px;
    background-color: #000;
    border: 1px solid #bbb;
}
.head .well {
    margin: 0;
}
.well.black {
    background-color: #000;
}

/* Taskbar */
.taskbar {
    height: 35px;
    flex: none;
    display: flex;
    align-items: stretch;
    background-color: #050a12;
    color: #fff;
}
.start {
    width: 42px;
}
.search {
    width: 302px;
    display: flex;
    align-items: center;
    padding: 0 12px 0 7px;
    gap: 8px;
    background-color: #f1f1f1;
}
.search input {
    flex: 1;
    font-size: 12px;
}
.search input::placeholder {
    color: #444;
    opacity: 1;
}
.apps {
    display: flex;
    padding-left: 2px;
}
.apps button {
    width: 43px;
    border-bottom: 2px solid transparent;
}
.apps svg {
    width: 20px;
    height: 20px;
}
.apps button.current {
    background-color: #3b4048;
    border-color: #f4bdb8;
}
.apps button.open {
    width: 35px;
    margin: 0 4px;
    border-color: #f4bdb8;
}
.adobe {
    width: 19px;
    height: 18px;
    border: 1px solid;
    font-size: 10px;
    font-weight: bold;
    line-height: 16px;
}
.ps {
    color: #9ab0f0;
    background-color: #0a0a48;
}
.ai {
    color: #f29a2e;
    background-color: #2a1400;
}
.au {
    color: #3fc09c;
    background-color: #06302c;
}
.tray {
    margin-left: auto;
    display: flex;
    align-items: center;
    gap: 7px;
}
.people {
    margin-right: 12px;
}
.clock {
    width: 50px;
    display: flex;
    flex-direction: column;
    align-items: center;
    gap: 1px;
    font: 10px/15px Roboto, "Open Sans", sans-serif;
}
.notes {
    position: relative;
    width: 43px;
    height: 35px;
    padding-left: 7px;
    justify-content: flex-start;
}
.badge {
    position: absolute;
    left: 13px;
    top: 17px;
    width: 14px;
    height: 14px;
    border: 1px solid #999;
    border-radius: 50%;
    background-color: #222;
    font-size: 10px;
}
```
